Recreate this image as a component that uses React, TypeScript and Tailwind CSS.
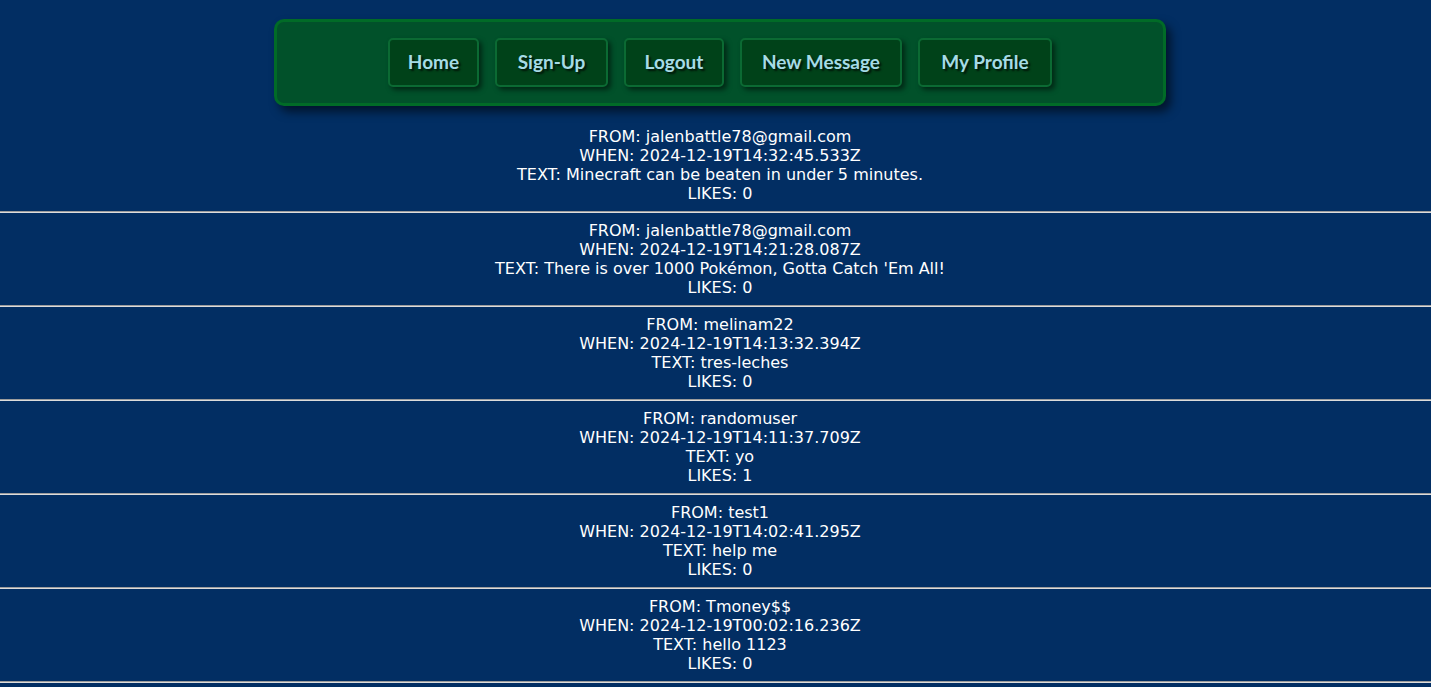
import React from "react";

type Message = {
    from: string
    when: string
    text: string
    likes: number
}

const links = [
    {label: 'Home', width: 'w-[91px]'},
    {label: 'Sign-Up', width: 'w-[113px]'},
    {label: 'Logout', width: 'w-[100px]'},
    {label: 'New Message', width: 'w-[162px]'},
    {label: 'My Profile', width: 'w-[134px]'},
]

const messages: Message[] = [
    {from: 'jalenbattle78@gmail.com', when: '2024-12-19T14:32:45.533Z', text: 'Minecraft can be beaten in under 5 minutes.', likes: 0},
    {from: 'jalenbattle78@gmail.com', when: '2024-12-19T14:21:28.087Z', text: "There is over 1000 Pokémon, Gotta Catch 'Em All!", likes: 0},
    {from: 'melinam22', when: '2024-12-19T14:13:32.394Z', text: 'tres-leches', likes: 0},
    {from: 'randomuser', when: '2024-12-19T14:11:37.709Z', text: 'yo', likes: 1},
    {from: 'test1', when: '2024-12-19T14:02:41.295Z', text: 'help me', likes: 0},
    {from: 'Tmoney$$', when: '2024-12-19T00:02:16.236Z', text: 'hello 1123', likes: 0},
]

const NavBar: React.FC = () => {
    return (
        <nav
            className="mx-auto mt-[19px] mb-[13px] w-[892px] rounded-[10px] border-[3px] border-[#016b27] bg-[#01512a] py-4 shadow-[5px_6px_10px_rgba(0,0,0,0.55)]">
            <ul className="flex justify-center gap-4">
                {links.map(link => (
                    <li key={link.label}>
                        <a
                            href="#"
                            className={`${link.width} flex h-[49px] items-center justify-center rounded-[5px] border-2 border-[#0b6a33] bg-[#004219] text-[19px] font-bold text-[#a6dbe6] shadow-[3px_3px_5px_rgba(0,0,0,0.5)] [text-shadow:2px_2px_2px_rgba(0,0,0,0.7)] [font-family:'Comic_Sans_MS','Lato',sans-serif]`}
                        >
                            {link.label}
                        </a>
                    </li>
                ))}
            </ul>
        </nav>
    )
}

export default function App() {
    return (
        <div className="min-h-screen overflow-hidden bg-[#022e63] text-white [font-family:'DejaVu_Sans',Verdana,sans-serif]">
            <div className="w-[1440px]">
                <NavBar/>
                {messages.map((msg, i) => (
                    <div key={i}>
                        <div className="py-2 text-center text-[16px] leading-[19px]">
                            <div>FROM: {msg.from}</div>
                            <div>WHEN: {msg.when}</div>
                            <div>TEXT: {msg.text}</div>
                            <div>LIKES: {msg.likes}</div>
                        </div>
                        <hr className="h-[2px] border-0 border-t border-b border-t-[#9c9c9c] border-b-[#dcdcdc]"/>
                    </div>
                ))}
            </div>
        </div>
    )
}
